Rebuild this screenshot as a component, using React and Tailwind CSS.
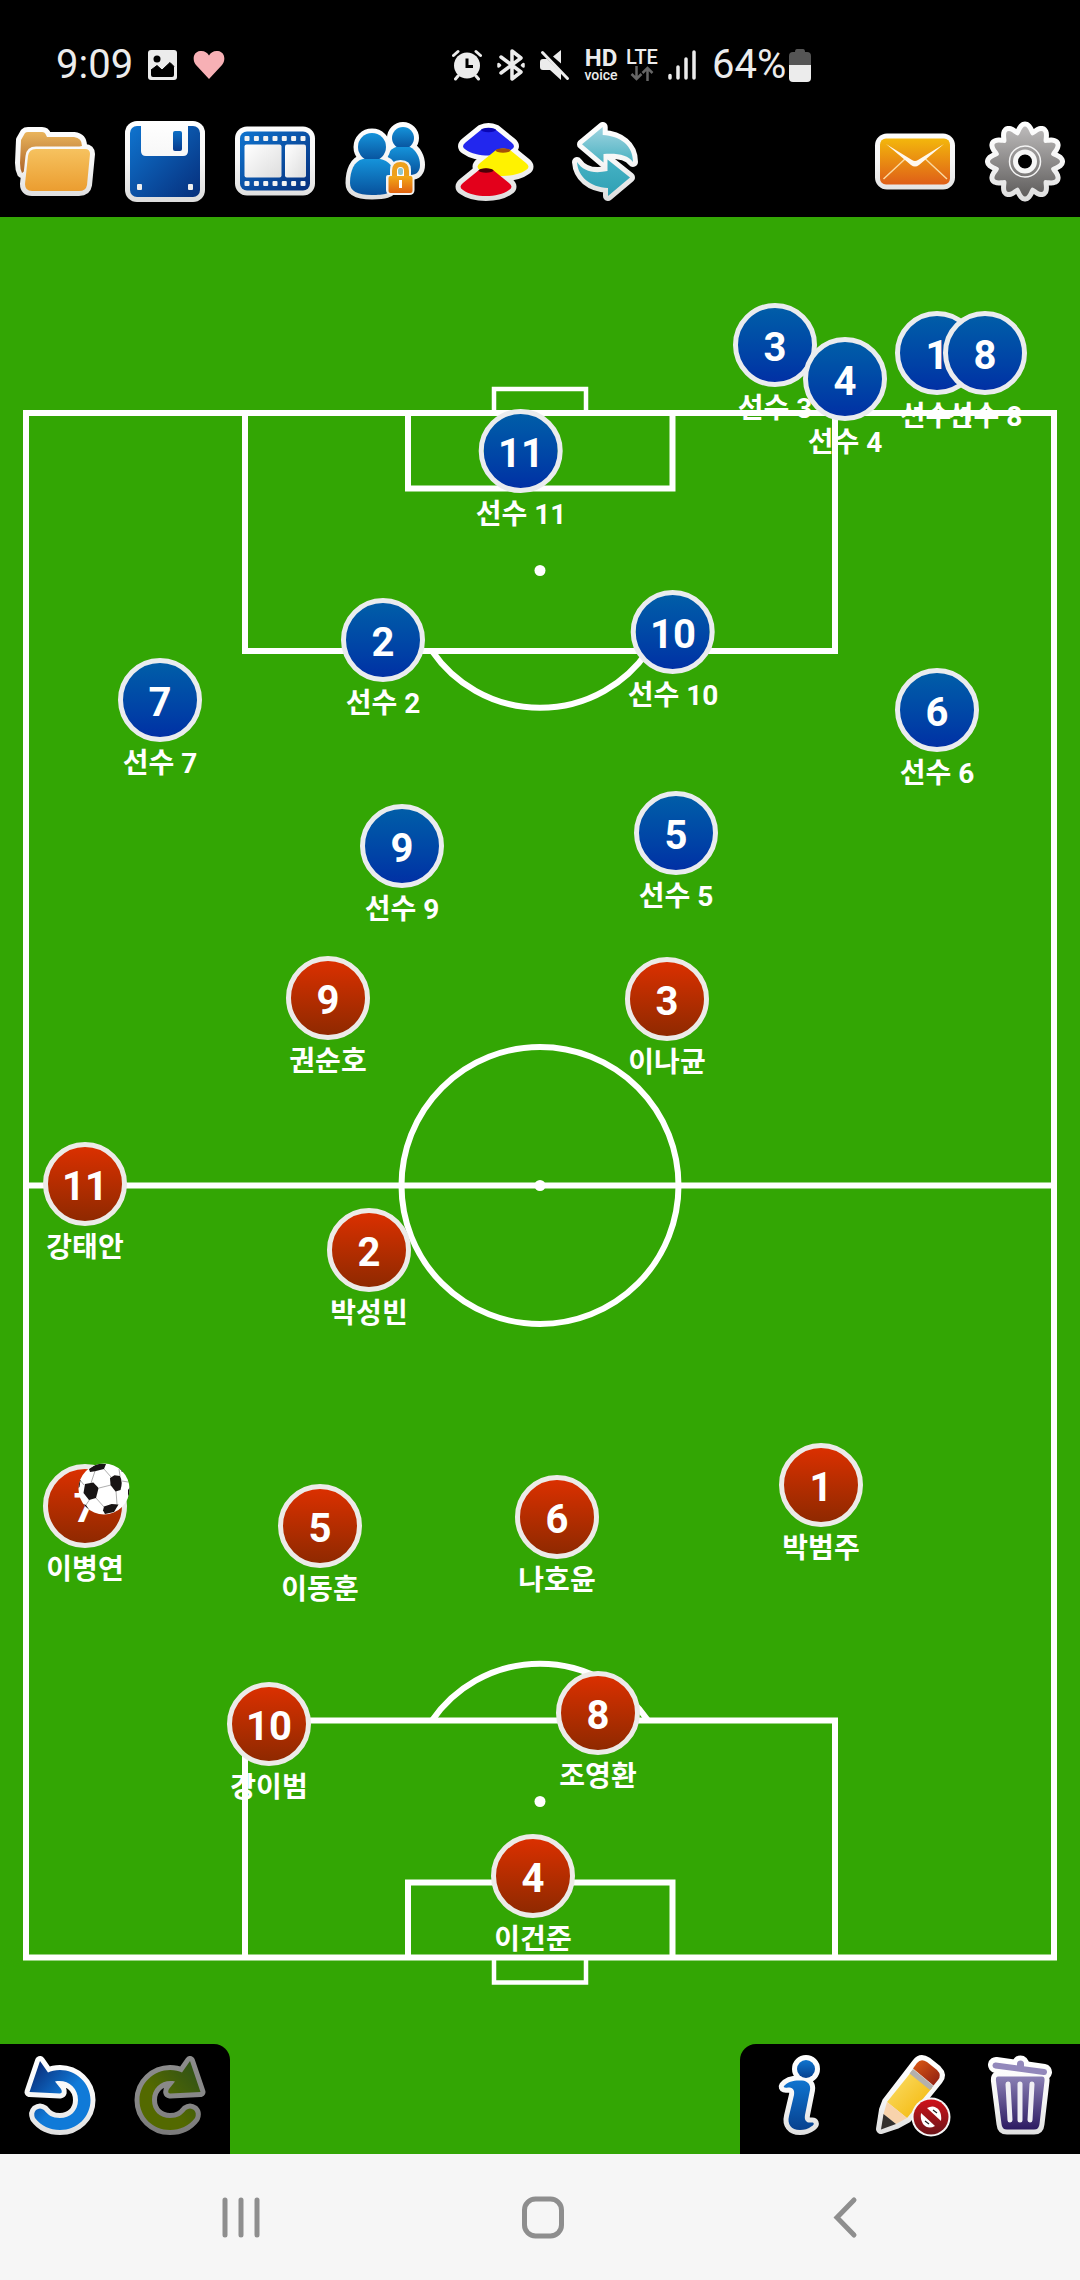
import React from "react";

const PITCH_W = 1080;
const PITCH_H = 1937;

const players = [
  { team: "blue", number: 3, name: "선수 3", x: 775, y: 128 },
  { team: "blue", number: 4, name: "선수 4", x: 845, y: 162 },
  { team: "blue", number: 1, name: "선수 1", x: 937, y: 136 },
  { team: "blue", number: 8, name: "선수 8", x: 985, y: 136 },
  { team: "blue", number: 11, name: "선수 11", x: 521, y: 234 },
  { team: "blue", number: 2, name: "선수 2", x: 383, y: 423 },
  { team: "blue", number: 10, name: "선수 10", x: 673, y: 415 },
  { team: "blue", number: 7, name: "선수 7", x: 160, y: 483 },
  { team: "blue", number: 6, name: "선수 6", x: 937, y: 493 },
  { team: "blue", number: 9, name: "선수 9", x: 402, y: 629 },
  { team: "blue", number: 5, name: "선수 5", x: 676, y: 616 },
  { team: "red", number: 9, name: "권순호", x: 328, y: 781 },
  { team: "red", number: 3, name: "이나균", x: 667, y: 782 },
  { team: "red", number: 11, name: "강태안", x: 85, y: 967 },
  { team: "red", number: 2, name: "박성빈", x: 369, y: 1033 },
  { team: "red", number: 7, name: "이병연", x: 85, y: 1289 },
  { team: "red", number: 5, name: "이동훈", x: 320, y: 1309 },
  { team: "red", number: 6, name: "나호윤", x: 557, y: 1300 },
  { team: "red", number: 1, name: "박범주", x: 821, y: 1268 },
  { team: "red", number: 10, name: "강이범", x: 269, y: 1507 },
  { team: "red", number: 8, name: "조영환", x: 598, y: 1496 },
  { team: "red", number: 4, name: "이건준", x: 533, y: 1659 },
];

const place = (x, y) => ({
  left: `${(x / PITCH_W) * 100}%`,
  top: `${(y / PITCH_H) * 100}%`,
});

function Grad({ id, from, to, diagonal, end = 1 }) {
  return (
    <linearGradient id={id} x1="0" y1="0" x2={diagonal ? "1" : "0"} y2="1">
      <stop offset="0" stopColor={from} />
      <stop offset={end} stopColor={to} />
    </linearGradient>
  );
}

function Sheet() {
  return (
    <svg className="absolute size-0" aria-hidden="true">
      <defs>
        <linearGradient id="rim" gradientUnits="userSpaceOnUse" x1="0" y1="14" x2="0" y2="95">
          <stop offset="0" stopColor="#ffffff" />
          <stop offset="0.5" stopColor="#f6f6f6" />
          <stop offset="1" stopColor="#dcdcdc" />
        </linearGradient>
        <Grad id="folderBack" from="#e9b45c" to="#ad6428" />
        <Grad id="folderFront" from="#f6c25f" to="#eb9d30" />
        <Grad id="blue" from="#0f74cf" to="#062f7c" diagonal />
        <Grad id="slot" from="#0c6fc6" to="#083a8c" />
        <Grad id="frame" from="#ffffff" to="#dddddd" diagonal />
        <Grad id="people" from="#1593da" to="#07519c" />
        <Grad id="lock" from="#f3aa18" to="#e0620f" />
        <Grad id="tealTop" from="#9fd4e0" to="#4cb2c2" />
        <Grad id="tealLow" from="#46b2c4" to="#2fa0b4" />
        <Grad id="mail" from="#f3b70c" to="#df5f18" />
        <Grad id="gear" from="#bcbaba" to="#5f5d5c" />
        <Grad id="info" from="#0f74cf" to="#07418f" />
        <Grad id="undo" from="#08226c" to="#107ad8" diagonal end={0.55} />
        <Grad id="redo" from="#4f9030" to="#98c000" diagonal end={0.6} />
        <Grad id="pencil" from="#fbe070" to="#f3b400" diagonal />
        <Grad id="eraser" from="#dd5a14" to="#8c1d12" diagonal />
        <Grad id="ban" from="#d0121a" to="#6c1418" />
        <Grad id="trash" from="#8a80b4" to="#2c1a62" />
      </defs>
    </svg>
  );
}

const rim = {
  fill: "url(#rim)",
  stroke: "url(#rim)",
  strokeWidth: 10,
  strokeLinejoin: "round",
  strokeLinecap: "round",
};

function FolderIcon() {
  const back = "M21 33 L25 26 Q26 25 28 25 H42 Q45 25 46 28 L47 30 H74 Q82 31 82 39 L30 60 L22 66 Q20 62 20 56 Z";
  const front = "M36 42 H85 Q90 42 90 47 L87 78 Q86 84 79 84 H32 Q25 84 25 77 L28 49 Q29 42 36 42 Z";
  return (
    <>
      <path d={back} {...rim} />
      <path d={front} {...rim} />
      <path d={back} fill="url(#folderBack)" />
      <path d={front} fill="none" stroke="url(#rim)" strokeWidth="5" />
      <path d={front} fill="url(#folderFront)" />
    </>
  );
}

function SaveIcon() {
  return (
    <>
      <rect x="15" y="14" width="80" height="81" rx="12" fill="url(#rim)" />
      <rect x="20" y="19" width="70" height="71" rx="7" fill="url(#blue)" />
      <path d="M31 18 H78 V44 Q78 49 73 49 H36 Q31 49 31 44 Z" fill="url(#rim)" />
      <rect x="63" y="24" width="9" height="20" rx="2" fill="url(#slot)" />
      <rect x="27" y="77" width="5" height="6" rx="1" fill="#eee" />
      <rect x="78" y="77" width="5" height="6" rx="1" fill="#eee" />
    </>
  );
}

function FilmIcon() {
  return (
    <>
      <rect x="15" y="19.500" width="80" height="69" rx="12" fill="url(#rim)" />
      <rect x="20" y="24.500" width="70" height="59" rx="7" fill="url(#blue)" />
      {[27, 36.4, 45.7, 55, 64.3, 73.6, 83].map((x) => (
        <g key={x} fill="#f2f2f2">
          <rect x={x - 2.5} y="29" width="5" height="5" rx="1" />
          <rect x={x - 2.5} y="74" width="5" height="5" rx="1" />
        </g>
      ))}
      <rect x="24.500" y="37.500" width="37" height="33" rx="2" fill="url(#frame)" />
      <rect x="65" y="37.500" width="21" height="33" rx="2" fill="url(#frame)" />
    </>
  );
}

function PeopleIcon() {
  const back = "M66 40 C60 42 56 48 57 56 L62 68 H80 C87 68 90 64 90 58 C90 50 86 43 80 40 Z";
  const front = "M33 52 C24 54 20 64 20 76 C20 84 27 88 42 88 C53 88 63 87 63 79 V62 C60 56 56 53 50 52 Z";
  return (
    <>
      <g {...rim}>
        <circle cx="73" cy="31" r="11" />
        <path d={back} />
      </g>
      <g fill="url(#people)">
        <circle cx="73" cy="31" r="11" />
        <path d={back} />
      </g>
      <g {...rim} strokeWidth="9">
        <circle cx="42" cy="40" r="14" />
        <path d={front} />
      </g>
      <g fill="url(#people)">
        <circle cx="42" cy="40" r="14" />
        <path d={front} />
      </g>
      <path d="M58 70 H62 V63 Q62 55 70.500 55 Q79 55 79 63 V70 H82.500 V83 Q82.500 86 79 86 H62 Q58 86 58 83 Z" fill="#fff" stroke="#f2f2f2" strokeWidth="4" strokeLinejoin="round" />
      <path d="M64.500 71 V64 Q64.500 57.500 70.500 57.500 Q76.500 57.500 76.500 64 V71" fill="none" stroke="#eda01c" strokeWidth="5" />
      <rect x="68" y="61" width="5" height="7" rx="2" fill="#8fc6cd" />
      <rect x="58.500" y="69" width="24" height="17" rx="2" fill="url(#lock)" />
      <path d="M69 73 H72 V81 H69 Z" fill="#fff" />
    </>
  );
}

const cones = [
  { x: 48.5, y: 20.5, fill: "#2227ee", cap: "#0a06b4" },
  { x: 63, y: 41, fill: "#fff200", cap: "#a55008" },
  { x: 46, y: 61, fill: "#e3001b", cap: "#4a0008" },
];

const conePath = (x, y) =>
  `M${x - 7} ${y + 2} Q${x} ${y - 1} ${x + 7} ${y + 2} L${x + 23} ${y + 15} Q${x + 28} ${y + 19} ${x + 23} ${y + 22} C${x + 12} ${y + 30} ${x - 12} ${y + 30} ${x - 23} ${y + 22} Q${x - 28} ${y + 19} ${x - 23} ${y + 15} Z`;

function ConesIcon() {
  return (
    <>
      {cones.map((c) => (
        <path key={c.fill} d={conePath(c.x, c.y)} {...rim} />
      ))}
      {cones.map((c) => (
        <g key={c.fill}>
          <path d={conePath(c.x, c.y)} fill={c.fill} />
          <ellipse cx={c.x} cy={c.y + 2.5} rx="7.500" ry="2.200" fill={c.cap} />
        </g>
      ))}
    </>
  );
}

function RefreshIcon() {
  const top = "M32 37.300 L52.700 20 V28 C70 29 83 38 83 55 C78 48 68 46 53.500 47 V55.500 Z";
  const low = "M80 70.500 L58 89 V81 C40 80 28 70 27 55 C33 64 43 67 57.500 64 V52.500 Z";
  return (
    <>
      <path d={top} {...rim} />
      <path d={low} {...rim} />
      <path d={top} fill="url(#tealTop)" />
      <path d={low} fill="url(#tealLow)" />
    </>
  );
}

function MailIcon() {
  return (
    <>
      <rect x="15" y="26.500" width="80" height="56" rx="12" fill="url(#rim)" />
      <rect x="20" y="31.500" width="70" height="46" rx="6" fill="url(#mail)" />
      <path d="M45 52 L23.500 72 M65.500 52 L87 72" stroke="#fbd9a0" strokeWidth="1.500" />
      <path d="M26 37 L52 53 Q55 55 58 53 L84 37 L59 58 Q55 61 51 58 Z" fill="#fff8ee" />
    </>
  );
}

const gearPath =
  Array.from({ length: 180 }, (_, i) => {
    const a = (i / 180) * Math.PI * 2;
    const r = 31 + 4 * Math.cos(12 * a);
    return `${i ? "L" : "M"}${(55 + r * Math.sin(a)).toFixed(2)} ${(54.5 - r * Math.cos(a)).toFixed(2)}`;
  }).join(" ") + " Z";

function GearIcon() {
  return (
    <>
      <path d={gearPath} {...rim} />
      <path d={gearPath} fill="url(#gear)" />
      <circle cx="55" cy="54.500" r="15.500" fill="none" stroke="#f4f4f4" strokeWidth="1.500" />
      <circle cx="55" cy="54.500" r="9.500" fill="#000" stroke="#f6f6f6" strokeWidth="5" />
    </>
  );
}

const turnArrow =
  "M35 17 L24.500 48 L55 49.500 Q58 49 56 45 L50 37.500 C62 35 73 43 73 56 C73 67 65 74 55 74 C47 74 43 71 39 66 Q35 63 31 66 Q28 69 30 74 C36 82 45 86 55 86 C72 86 85.500 73 85.500 56 C85.500 39 71 26 55 26 C50 26 46 27 43 28.500 Z";

function UndoIcon() {
  return (
    <>
      <path d={turnArrow} {...rim} />
      <path d={turnArrow} fill="url(#undo)" />
    </>
  );
}

function RedoIcon() {
  return (
    <g opacity="0.55" transform="translate(110 0) scale(-1 1)">
      <path d={turnArrow} {...rim} />
      <path d={turnArrow} fill="url(#redo)" />
    </g>
  );
}

function InfoIcon() {
  const body =
    "M39 42 C43 37 50 36 57 36.500 C63 37 66 41 65 46 L60 71 C59 77 62 79 66 78.500 C69 78 70 80 67 82 C63 85 59 86 55 86 C46 86 42 80 44 72 L49 51 C50 45 47 43.500 43 43.500 C40 44 38 43.500 39 42 Z";
  return (
    <>
      <g {...rim}>
        <circle cx="61" cy="25" r="9" />
        <path d={body} />
      </g>
      <circle cx="61" cy="25" r="9" fill="url(#info)" />
      <path d={body} fill="url(#info)" />
    </>
  );
}

function PencilIcon() {
  const shape = "M26 85 L29 66 L32 58 L62 19 Q66 14 72 18 L82 26 Q87 31 83 36 L52 74 L41 80 Z";
  return (
    <>
      <path d={shape} {...rim} />
      <path d="M32 58 L57 27 L77 44 L52 74 Z" fill="url(#pencil)" />
      <path d="M54.500 29.500 L58 25 L78.500 42 L75 46 Z" fill="#b4b0ac" />
      <path d="M58 24.500 L62 19 Q66 14 72 18 L82 26 Q87 31 83 36 L78.500 41.500 Z" fill="url(#eraser)" />
      <path d="M32 58 L52 74 L41 80 L28.500 70 Z" fill="#f8d3ac" />
      <path d="M28.500 70 L41 80 L26 85.500 Z" fill="#33302e" />
      <circle cx="76" cy="73" r="19.500" fill="#f6f6f6" />
      <circle cx="76" cy="73" r="17.500" fill="url(#ban)" />
      <path d="M72 64 Q79 60 84 66 Q87 71 86 77 Z" fill="#fff" />
      <path d="M80 82 Q73 86 68 80 Q65 75 66 69 Z" fill="#fff" />
      <path d="M78 66 L82 69 M70 77 L74 80" stroke="#222" strokeWidth="1.200" />
    </>
  );
}

function TrashIcon() {
  const can = "M33 32.500 H77 Q80 32.500 79.500 37 L74.500 80 Q74 85.500 69 85.500 H42 Q37 85.500 36.500 80 L31 37 Q30.500 32.500 33 32.500 Z";
  return (
    <>
      <g {...rim}>
        <path d={can} />
        <path d="M31 21 L79 28" strokeWidth="16" />
        <circle cx="55.500" cy="20" r="3.500" />
      </g>
      <path d={can} fill="url(#trash)" />
      <path d="M30.500 21.500 L79 28" stroke="#9288bb" strokeWidth="6" strokeLinecap="round" />
      <rect x="52" y="16.500" width="7" height="9" rx="3.500" fill="#9288bb" />
      <path d="M43 40 L45 76 M55 40 V76 M67 40 L65 76" stroke="#f0eff4" strokeWidth="5" strokeLinecap="round" />
    </>
  );
}

function ToolButton({ label, icon: Icon, disabled }) {
  return (
    <button type="button" aria-label={label} disabled={disabled} className="size-[110px] shrink-0">
      <svg viewBox="0 0 110 110" className="size-full" aria-hidden="true">
        <Icon />
      </svg>
    </button>
  );
}

function StatusBar() {
  return (
    <div className="flex h-[107px] items-center justify-between bg-black pt-[23px] pr-[269px] pl-14 text-[#ececec]">
      <div className="flex items-center">
        <span className="w-[92px] text-[40px] leading-10">9:09</span>
        <svg viewBox="0 0 30 30" className="mr-[15px] size-[30px]" aria-hidden="true">
          <rect width="29" height="30" rx="3" fill="#ececec" />
          <circle cx="9" cy="9" r="3.500" fill="#000" />
          <path d="M3 20 L9 15.500 L14 20 L22 12.500 L26 16.500 V25 Q26 27 24 27 H5 Q3 27 3 25 Z" fill="#000" />
          <path d="M3 20 L9 15.500 L14 20 L22 12.500 L26 16.500" fill="none" stroke="#000" strokeWidth="1" />
        </svg>
        <svg viewBox="0 0 32 30" className="h-[30px] w-8" aria-hidden="true">
          <path d="M16 29 L3 15 C-1 10 0 2 7 1 C11 0.500 14 2 16 5.500 C18 2 21 0.500 25 1 C32 2 33 10 29 15 Z" fill="#f7b0b5" />
        </svg>
      </div>
      <div className="flex items-center">
        <svg viewBox="0 0 30 32" className="mr-[15px] h-8 w-[30px]" aria-hidden="true">
          <circle cx="15" cy="16.500" r="13" fill="#ececec" />
          <path d="M15 9.500 V17.500 H21" fill="none" stroke="#000" strokeWidth="3" />
          <path d="M1.500 6.500 L6 2.500 M28.500 6.500 L24 2.500 M3.500 30 L6 27 M26.500 30 L24 27" stroke="#ececec" strokeWidth="3" strokeLinecap="round" />
        </svg>
        <svg viewBox="0 0 28 32" className="mr-[15px] h-8 w-7" fill="none" stroke="#ececec" strokeWidth="3.500" strokeLinecap="round" strokeLinejoin="round" aria-hidden="true">
          <path d="M4 8 L24 23 L15 30 V2 L24 9 L4 24" />
          <path d="M1.500 15 V17.500 L3 16.200 Z M26.500 15 V17.500 L25 16.200 Z" strokeWidth="2.500" />
        </svg>
        <svg viewBox="0 0 30 32" className="mr-3.5 h-8 w-[30px]" aria-hidden="true">
          <path d="M13 7.500 L21 1 V14.500 Z M0 13 Q0 10 3 10 H7 L21 24 V31 L10 21 H3 Q0 21 0 18 Z" fill="#ececec" />
          <path d="M2.500 3.500 L27.500 29.500" stroke="#ececec" strokeWidth="3" strokeLinecap="round" />
        </svg>
        <div className="mr-2 flex w-[34px] flex-col items-center">
          <span className="text-[24px] leading-[19px] font-bold">HD</span>
          <span className="text-[14px] leading-[14px] font-medium">voice</span>
        </div>
        <div className="mr-2.5 flex w-8 flex-col items-center">
          <span className="text-[20px] leading-[17px] font-medium">LTE</span>
          <svg viewBox="0 0 24 15" className="h-[15px] w-6" fill="none" stroke="#666" strokeWidth="2.500" aria-hidden="true">
            <path d="M6.500 0 V13 M1.500 8 L6.500 13 L11.500 8 M17.500 15 V2 M12.500 7 L17.500 2 L22.500 7" />
          </svg>
        </div>
        <svg viewBox="0 0 28 30" className="mr-4 h-[30px] w-7" stroke="#ececec" strokeWidth="3.500" strokeLinecap="round" aria-hidden="true">
          <path d="M2 25.500 V28 M10 17 V28 M18 9 V28 M26 2 V28" />
        </svg>
        <span className="w-[77px] text-[40px] leading-10">64%</span>
        <svg viewBox="0 0 22 34" className="h-[34px] w-[22px]" aria-hidden="true">
          <path d="M6 4 Q6 1 8 1 H14 Q16 1 16 4 H18 Q22 4 22 8 V17 H0 V8 Q0 4 4 4 Z" fill="#555" />
          <path d="M0 17 H22 V30 Q22 34 18 34 H4 Q0 34 0 30 Z" fill="#ececec" />
        </svg>
      </div>
    </div>
  );
}

function PitchLines() {
  return (
    <svg viewBox="0 0 1080 1937" className="block w-full" fill="none" stroke="#fff" strokeWidth="6" aria-hidden="true">
      <rect x="26" y="196" width="1028" height="1544.500" />
      <path d="M26 968.500 H1054" />
      <circle cx="540" cy="968.500" r="138.500" />
      <path d="M245 196 V434 H835 V196 M408 196 V271.500 H672.500 V196" />
      <path d="M245 1740.500 V1503.500 H835 V1740.500 M408 1740.500 V1665.500 H672.500 V1740.500" />
      <path d="M432 434 A131 131 0 0 0 648 434 M432 1503.500 A131 131 0 0 1 648 1503.500" />
      <path d="M494 196 V172 H586 V196 M494 1740.500 V1765.500 H586 V1740.500" strokeWidth="4.500" />
      <g fill="#fff" stroke="none">
        <circle cx="540" cy="353.500" r="5.500" />
        <circle cx="540" cy="968.500" r="5.500" />
        <circle cx="540" cy="1584.500" r="5.500" />
      </g>
    </svg>
  );
}

const tokenColors = {
  blue: "from-[#0460a8] to-[#042ca4] border-[#eaecee]",
  red: "from-[#e03000] to-[#8a2800] border-[#ecebe8]",
};

function Player({ team, number, name, x, y }) {
  return (
    <button
      type="button"
      className="absolute -mt-[42px] flex -translate-x-1/2 flex-col items-center font-bold whitespace-nowrap text-white"
      style={place(x, y)}
    >
      <span className={`flex size-[84px] items-center justify-center rounded-full border-5 bg-linear-to-b bg-origin-border pt-1.5 text-[40px] leading-10 ${tokenColors[team]}`}>
        {number}
      </span>
      <span className="mt-1.5 text-[28px] leading-8">{name}</span>
    </button>
  );
}

function Ball() {
  return (
    <svg
      viewBox="0 0 52 52"
      className="absolute size-[52px] -translate-x-1/2 -translate-y-1/2"
      style={place(104, 1272)}
      role="img"
      aria-label="공"
    >
      <clipPath id="ballClip">
        <circle cx="26" cy="26" r="25.500" />
      </clipPath>
      <circle cx="26" cy="26" r="25.500" fill="#fff" />
      <g clipPath="url(#ballClip)">
        <path
          d="M26 6 L33 14 M17 8 L13 20 M21 25 L33 22 M38 28 L39 41 M18 35 L26 44 M44 18 L50 19 M12 36 L8 42 M6 22 L2 17 M42 13 L41 6"
          stroke="#999"
          strokeWidth="0.800"
        />
        <g fill="#181414">
          <path d="M32 15 L36.500 12.300 L42 13 Q45 19 42.500 27 L37.500 28.500 L32.500 22 Z" />
          <path d="M7 21 L15.300 19.600 L20.600 25 L18 35 L11 37 L5.500 30 Z" />
          <path d="M11 6 L20 0 L28 1 L26 6 L17 8.300 L12 9 Z" />
          <path d="M26 43.500 L33.600 41 L40.500 41.600 L36 49 L27 51 L25 47.600 Z" />
          <path d="M0 18 L2.500 17 L1.500 24 L0 25 Z M52 24 L50 27 L50 33 L52 32 Z M5 41 L8 42 L12 48 L8 47 Z M41 4 L46 9 L44 9 Z" />
        </g>
      </g>
    </svg>
  );
}

function NavBar() {
  const shared = { fill: "none", stroke: "#8e8e8e", strokeWidth: 5, strokeLinecap: "round" };
  return (
    <nav className="grid h-[126px] shrink-0 grid-cols-3 items-center bg-[#f6f6f6] px-[90px]">
      <button type="button" aria-label="최근 앱" className="justify-self-center">
        <svg viewBox="0 0 60 60" className="size-[60px]" {...shared}>
          <path d="M15 13 V48 M31 13 V48 M47 13 V48" />
        </svg>
      </button>
      <button type="button" aria-label="홈" className="justify-self-center">
        <svg viewBox="0 0 60 60" className="size-[60px]" {...shared}>
          <rect x="14.500" y="12" width="37" height="37" rx="11" />
        </svg>
      </button>
      <button type="button" aria-label="뒤로" className="justify-self-center">
        <svg viewBox="0 0 60 60" className="size-[60px]" {...shared}>
          <path d="M44 13 L27 30.500 L44 48" strokeLinejoin="miter" />
        </svg>
      </button>
    </nav>
  );
}

export default function App() {
  return (
    <div className="flex min-h-screen flex-col bg-[#33a604] font-[Roboto,'Noto_Sans_CJK_KR',sans-serif]">
      <Sheet />
      <StatusBar />
      <header className="flex justify-between bg-black">
        <div className="flex">
          <ToolButton label="열기" icon={FolderIcon} />
          <ToolButton label="저장" icon={SaveIcon} />
          <ToolButton label="애니메이션" icon={FilmIcon} />
          <ToolButton label="팀" icon={PeopleIcon} />
          <ToolButton label="훈련 도구" icon={ConesIcon} />
          <ToolButton label="초기화" icon={RefreshIcon} />
        </div>
        <div className="flex">
          <ToolButton label="메일" icon={MailIcon} />
          <ToolButton label="설정" icon={GearIcon} />
        </div>
      </header>
      <main className="relative overflow-hidden">
        <PitchLines />
        {players.map((p) => (
          <Player key={p.team + p.number} {...p} />
        ))}
        <Ball />
        <div className="absolute inset-x-0 bottom-0 flex justify-between">
          <div className="flex rounded-tr-2xl bg-black px-[5px]">
            <ToolButton label="실행 취소" icon={UndoIcon} />
            <ToolButton label="다시 실행" icon={RedoIcon} disabled />
          </div>
          <div className="flex rounded-tl-2xl bg-black px-[5px]">
            <ToolButton label="정보" icon={InfoIcon} />
            <ToolButton label="그리기 끄기" icon={PencilIcon} />
            <ToolButton label="삭제" icon={TrashIcon} />
          </div>
        </div>
      </main>
      <NavBar />
    </div>
  );
}
